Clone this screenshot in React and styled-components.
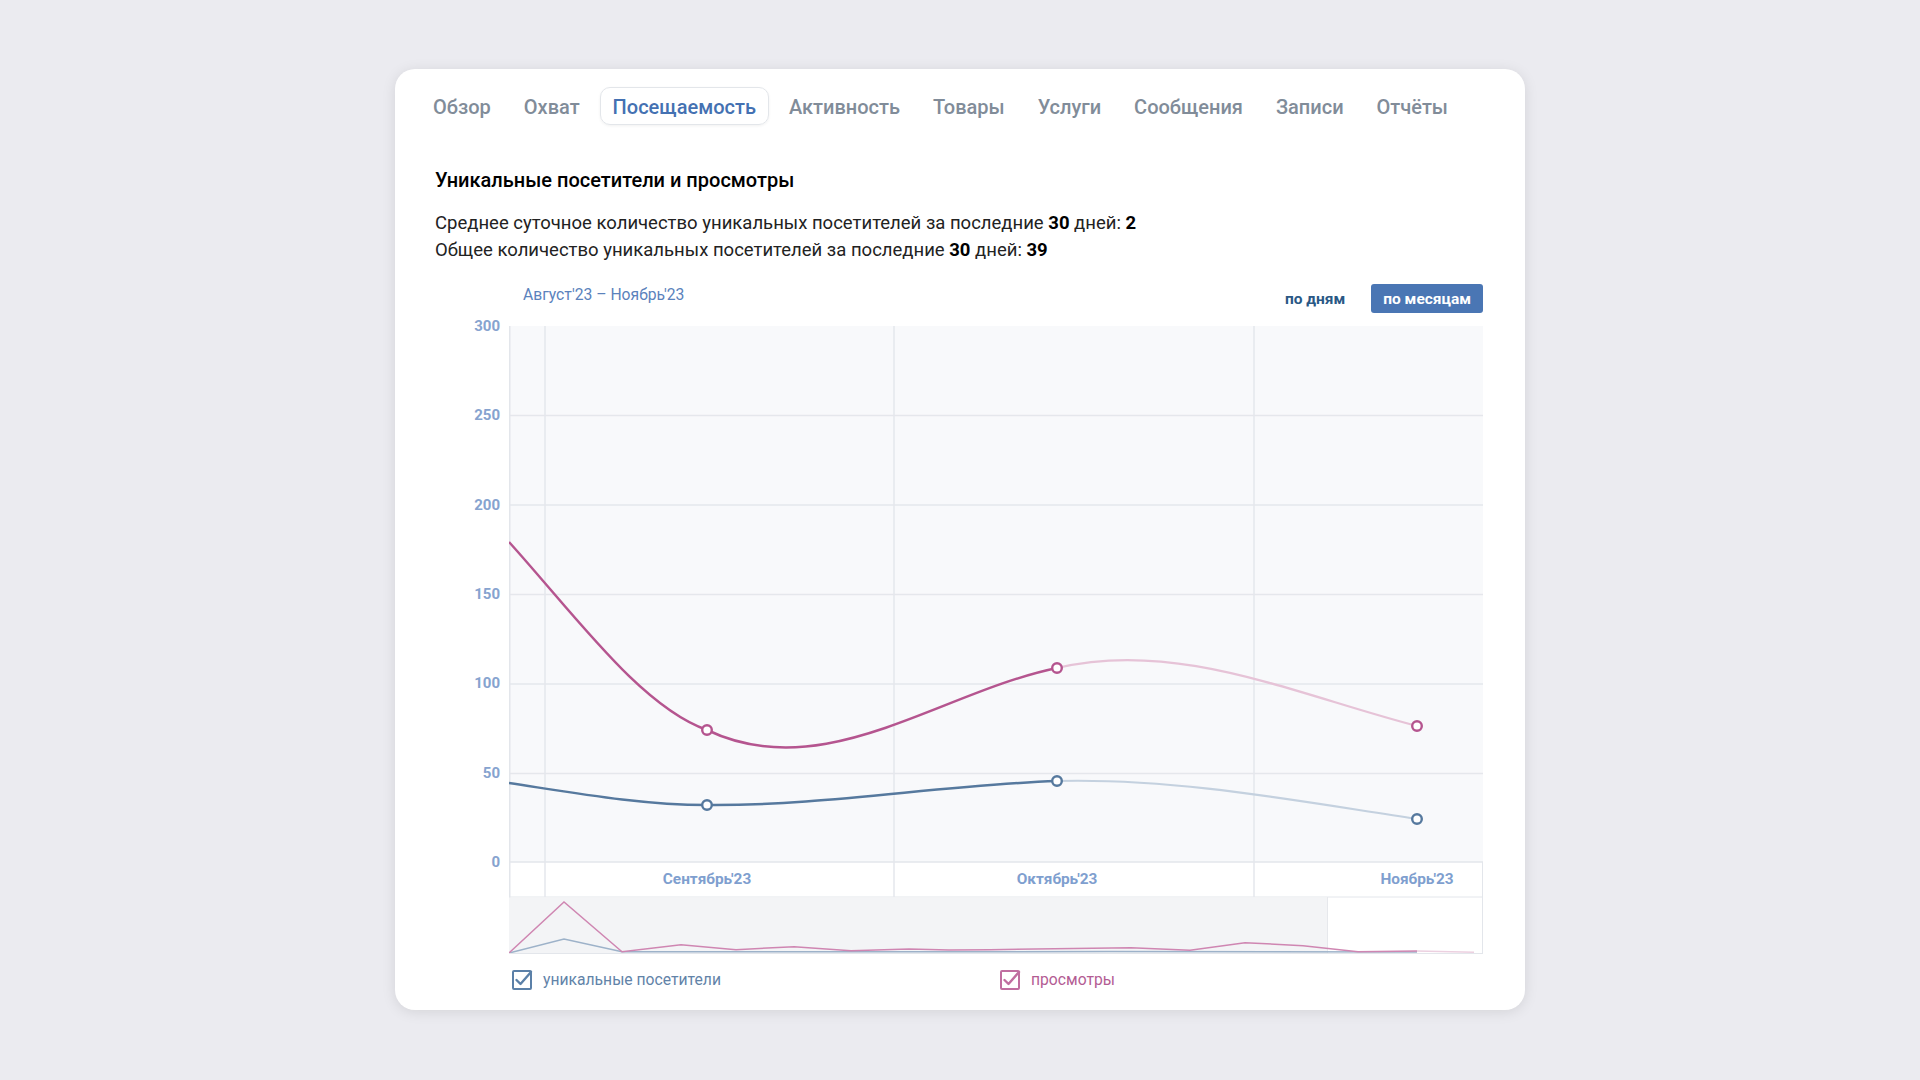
import React from 'react';
import styled, { createGlobalStyle } from 'styled-components';

const GlobalStyle = createGlobalStyle`
  body {
    margin: 0;
    background: #ebebf0;
    font-family: Roboto, "Liberation Sans", Arial, sans-serif;
  }
`;

// данные графика (координаты внутри области построения 974x536)
const tabs = ['Обзор', 'Охват', 'Посещаемость', 'Активность', 'Товары', 'Услуги', 'Сообщения', 'Записи', 'Отчёты'];
const yLabels = ['300', '250', '200', '150', '100', '50', '0'];
const months = [
  { label: "Сентябрь'23", x: 198 },
  { label: "Октябрь'23", x: 548 },
  { label: "Ноябрь'23", x: 908 },
];
const gridY = [89.5, 179, 268.5, 358, 447.5];
const gridX = [36, 385, 745];

const pinkSolid = 'M0,216 C66,289 132,381 198,404 C315,460 431,366 548,342';
const pinkFaded = 'M548,342 C668,313 788,369 908,400';
const blueSolid = 'M0,457 C66,467 132,479 198,479 C315,480 431,459 548,455';
const blueFaded = 'M548,455 C668,452 788,475 908,493';
const pinkDots = [[198, 404], [548, 342], [908, 400]];
const blueDots = [[198, 479], [548, 455], [908, 493]];

const navPink = '0,627 55,576 113,625.7 172,618.7 227,623.7 285,620.7 342,624.7 400,623 440,624 481,623.7 622,621.7 681,624.3 736,616.7 794,619.7 849,625.7 908,625';
const navBlue = '0,627 55,613 113,625.7 300,625.8 600,625.6 908,626';

const Page = styled.div`
  min-height: 100vh;
  padding-top: 69px;
  box-sizing: border-box;
  display: flex;
  justify-content: center;
`;

const Card = styled.div`
  width: 1130px;
  height: 941px;
  box-sizing: border-box;
  background: #fff;
  border-radius: 20px;
  box-shadow: 0 2px 14px rgba(0, 0, 0, 0.1);
  padding: 18px 41px 20px 40px;
`;

const Tabs = styled.div`
  display: flex;
  gap: 7px;
  margin-left: -15px;
`;

const Tab = styled.div`
  height: 38px;
  box-sizing: border-box;
  padding: 0 12px;
  display: flex;
  align-items: center;
  padding-top: 1px;
  font-size: 20px;
  font-weight: 500;
  border-radius: 10px;
  color: ${(p) => (p.$active ? '#4471b2' : '#818c99')};
  border: 1px solid ${(p) => (p.$active ? '#e3e6ea' : 'transparent')};
  box-shadow: ${(p) => (p.$active ? '0 1px 3px rgba(0,0,0,0.06)' : 'none')};
`;

const Title = styled.div`
  margin-top: 43px;
  font-size: 20px;
  line-height: 24px;
  font-weight: 500;
  color: #000;
`;

const Stats = styled.div`
  margin-top: 18px;
  font-size: 18.5px;
  line-height: 27px;
  color: #222;

  b {
    color: #000;
    font-weight: 700;
  }
`;

const ChartGrid = styled.div`
  margin-top: 20px;
  display: grid;
  grid-template-columns: 65px 974px;
  column-gap: 9px;
`;

const Header = styled.div`
  grid-column: 2;
  height: 29px;
  margin-bottom: 13px;
  padding-left: 14px;
  display: flex;
  align-items: center;
  justify-content: space-between;
`;

const Range = styled.div`
  font-size: 15.7px;
  color: #5b82bc;
  margin-top: -8px;
`;

const Switch = styled.div`
  display: flex;
  align-items: center;
  gap: 14px;
`;

const SwitchButton = styled.div`
  height: 29px;
  padding: 0 12px;
  display: flex;
  align-items: center;
  border-radius: 3px;
  font-size: 15.5px;
  font-weight: 700;
  color: ${(p) => (p.$active ? '#fff' : '#2a5885')};
  background: ${(p) => (p.$active ? '#4a76b4' : 'transparent')};
`;

const YAxis = styled.div`
  grid-column: 1;
  height: 552px;
  margin-top: -8px;
  display: flex;
  flex-direction: column;
  justify-content: space-between;
  align-items: flex-end;
`;

const YLabel = styled.div`
  height: 16px;
  line-height: 16px;
  font-size: 15px;
  font-weight: 700;
  color: #86a3cf;
`;

const Plot = styled.svg`
  grid-column: 2;
  display: block;
  font-family: Roboto, "Liberation Sans", Arial, sans-serif;
`;

const Legend = styled.div`
  grid-column: 2;
  margin-top: 15px;
  padding-left: 3px;
  display: grid;
  grid-template-columns: 488px 1fr;
`;

const LegendItem = styled.div`
  display: flex;
  align-items: center;
  gap: 10px;
  height: 20px;
  font-size: 15.7px;
  color: ${(p) => p.$color};
`;

const CheckIcon = ({ color }) => (
  <svg width="21" height="21" viewBox="0 0 21 21">
    <rect x="1" y="2" width="18" height="18" rx="1" fill="none" stroke={color} strokeWidth="2" />
    <path d="M4.5 11 L8.5 15 L19 3" fill="none" stroke={color} strokeWidth="2.4" strokeLinecap="round" strokeLinejoin="round" />
  </svg>
);

const Dots = ({ points, color }) =>
  points.map(([x, y]) => <circle key={x} cx={x} cy={y} r="4.8" fill="#fff" stroke={color} strokeWidth="2.4" />);

const App = () => (
  <>
    <GlobalStyle />
    <Page>
      <Card>
        <Tabs>
          {tabs.map((t, i) => (
            <Tab key={t} $active={i === 2}>{t}</Tab>
          ))}
        </Tabs>
        <Title>Уникальные посетители и просмотры</Title>
        <Stats>
          <div>Среднее суточное количество уникальных посетителей за последние <b>30</b> дней: <b>2</b></div>
          <div>Общее количество уникальных посетителей за последние <b>30</b> дней: <b>39</b></div>
        </Stats>
        <ChartGrid>
          <Header>
            <Range>Август'23 – Ноябрь'23</Range>
            <Switch>
              <SwitchButton>по дням</SwitchButton>
              <SwitchButton $active>по месяцам</SwitchButton>
            </Switch>
          </Header>
          <YAxis>
            {yLabels.map((l) => (
              <YLabel key={l}>{l}</YLabel>
            ))}
          </YAxis>
          <Plot width="974" height="628" viewBox="0 0 974 628">
            <rect x="0" y="0" width="974" height="536" fill="#f8f9fb" />
            {gridY.map((y) => (
              <line key={y} x1="0" x2="974" y1={y} y2={y} stroke="#e5e7ec" strokeWidth="1.5" />
            ))}
            <line x1="0" x2="974" y1="536" y2="536" stroke="#e3e6eb" strokeWidth="1.5" />
            <line x1="0" x2="974" y1="571" y2="571" stroke="#e3e6eb" strokeWidth="1" />
            {gridX.map((x) => (
              <line key={x} x1={x} x2={x} y1="0" y2="571" stroke="#e5e7ec" strokeWidth="1.5" />
            ))}
            <line x1="0.75" x2="0.75" y1="0" y2="627" stroke="#e3e6eb" strokeWidth="1.5" />
            <line x1="973.5" x2="973.5" y1="536" y2="627" stroke="#e3e6eb" strokeWidth="1" />
            {months.map((m) => (
              <text key={m.label} x={m.x} y="558" textAnchor="middle" fontSize="15.4" fontWeight="700" fill="#7f9fcf">
                {m.label}
              </text>
            ))}
            {/* навигатор */}
            <rect x="0" y="571.5" width="818" height="56" fill="#f3f4f6" />
            <line x1="818.5" x2="818.5" y1="571" y2="627" stroke="#e6e8ec" strokeWidth="1" />
            <polyline points={navBlue} fill="none" stroke="#9db2c9" strokeWidth="1.5" />
            <polyline points={navPink} fill="none" stroke="#cf86b2" strokeWidth="1.5" />
            <polyline points="908,625 965,626.3" fill="none" stroke="#ecd0e0" strokeWidth="1.5" />
            <line x1="0" x2="974" y1="627.5" y2="627.5" stroke="#e3e6eb" strokeWidth="1" />
            {/* серии */}
            <path d={pinkFaded} fill="none" stroke="#e6c3d7" strokeWidth="2.2" />
            <path d={blueFaded} fill="none" stroke="#c4d1df" strokeWidth="2.2" />
            <path d={pinkSolid} fill="none" stroke="#b5558f" strokeWidth="2.5" />
            <path d={blueSolid} fill="none" stroke="#56799e" strokeWidth="2.5" />
            <Dots points={pinkDots} color="#b5558f" />
            <Dots points={blueDots} color="#56799e" />
          </Plot>
          <Legend>
            <LegendItem $color="#6283a8">
              <CheckIcon color="#5b80a8" />
              уникальные посетители
            </LegendItem>
            <LegendItem $color="#b35c93">
              <CheckIcon color="#c06ea0" />
              просмотры
            </LegendItem>
          </Legend>
        </ChartGrid>
      </Card>
    </Page>
  </>
);

export default App;
